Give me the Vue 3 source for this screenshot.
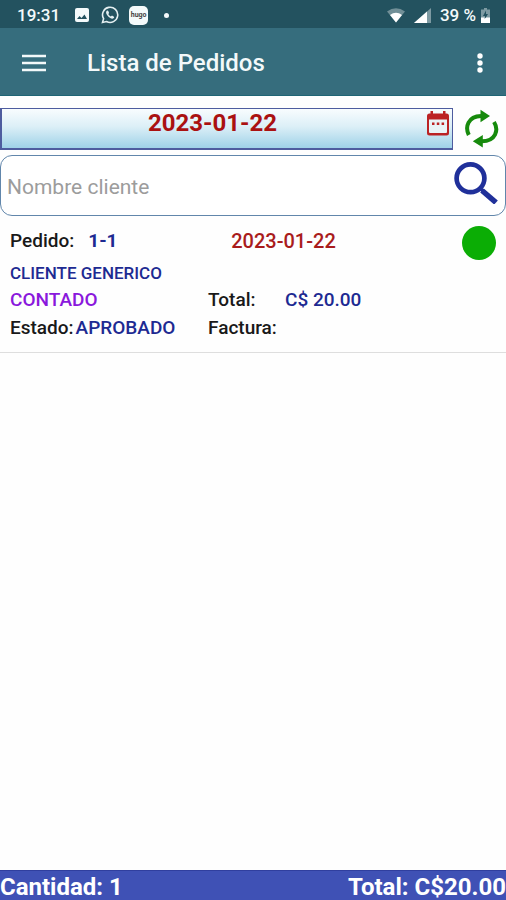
<template>
  <div class="screen">
    <div class="status-bar">
      <span>19:31</span>
      <svg class="status-image" width="14" height="14" viewBox="0 0 14 14" aria-hidden="true">
        <rect width="14" height="14" rx="2" fill="#f4fafb" />
        <path d="M2 11 4.500 8l2 2L9.500 6.500 12 11z" fill="#23525f" />
      </svg>
      <svg class="status-chat" width="18" height="18" viewBox="0 0 18 18" fill="none" aria-hidden="true">
        <path d="M1.500 16.500 2.600 12.700A7.600 7.600 0 1 1 5.500 15.500z" stroke="#e4eff1" stroke-width="1.600" />
        <path d="M5.800 4.800c-1.300 1-.8 3 .8 5 1.800 2.200 4.500 3.500 5.900 2.500 1-.8.8-1.500 0-1.900l-1.500-.8-1.200 1c-1-.4-2-1.400-2.500-2.500l.8-1-.8-2c-.3-.7-.9-.8-1.500-.3z" fill="#e4eff1" />
      </svg>
      <span class="status-app">hugo</span>
      <span class="status-dot" />
      <div class="status-right">
        <svg width="18" height="15" viewBox="0 0 18 15" aria-hidden="true">
          <path d="M0 3.500Q9-3 18 3.500L9 14.500z" fill="#718f97" />
          <path d="M3 7Q9 2.500 15 7L9 14.500z" fill="#fff" />
        </svg>
        <svg width="17" height="15" viewBox="0 0 17 15" aria-hidden="true">
          <path d="M0 15 17 0v15z" fill="#7d9aa2" />
          <path d="M0 15 13 3.500V15z" fill="#fff" />
        </svg>
        <span>39 %</span>
        <svg class="battery" width="9" height="15" viewBox="0 0 9 15" aria-hidden="true">
          <path d="M3 0h3v1.500h3V15H0V1.500h3z" fill="#7d9aa2" />
          <path d="M5 2.500 2 8h2v3l3-5H5z" fill="#23525f" />
          <path d="M0 9.500h3.500V11L5 9.500h4V15H0z" fill="#fff" />
        </svg>
      </div>
    </div>

    <header class="toolbar">
      <button class="icon-btn" type="button" aria-label="Abrir menú">
        <svg width="24" height="18" viewBox="0 0 24 18" aria-hidden="true">
          <path d="M0 2h24M0 9h24M0 16h24" stroke="#f3f9fa" stroke-width="2.400" />
        </svg>
      </button>
      <h1>Lista de Pedidos</h1>
      <button class="icon-btn" type="button" aria-label="Más opciones">
        <svg width="6" height="20" viewBox="0 0 6 20" fill="#fff" aria-hidden="true">
          <circle cx="3" cy="3" r="2.700" />
          <circle cx="3" cy="10" r="2.700" />
          <circle cx="3" cy="17" r="2.700" />
        </svg>
      </button>
    </header>

    <div class="date-row">
      <button class="date-btn" type="button">
        <span class="date-text">{{ date }}</span>
        <svg width="22" height="25" viewBox="0 0 22 25" aria-hidden="true">
          <path d="M3.500 0H6v2.500h10V0h2.500v2.500h1Q22 2.500 22 5v17q0 2.500-2.500 2.500h-17Q0 24.500 0 22V5q0-2.500 2.500-2.500h1z" fill="#bb2224" />
          <path d="M2 8.500h18V21q0 1-1 1H3q-1 0-1-1z" fill="#e9f3f7" />
          <path d="M5 11.500h2.500V14H5zM9.800 11.500h2.500V14H9.800zM14.600 11.500h2.500V14h-2.500z" fill="#bb2224" />
        </svg>
      </button>
      <button class="icon-btn refresh" type="button" aria-label="Actualizar">
        <svg width="36" height="40" viewBox="0 0 36 40" aria-hidden="true">
          <g fill="none" stroke="#168a0c" stroke-width="4">
            <path d="M4.800 27C.8 19 4 8.300 17 8" />
            <path d="M30 14C35 22 31.800 33 17.800 33.300" />
          </g>
          <path d="M16.500 1.700 26 8l-9.500 6.300zM18.800 27 8.800 33.300l10 6.300z" fill="#168a0c" />
        </svg>
      </button>
    </div>

    <form class="search-box" @submit.prevent>
      <input v-model="query" type="text" placeholder="Nombre cliente" aria-label="Nombre cliente" />
      <button class="icon-btn" type="submit" aria-label="Buscar">
        <svg width="44" height="42" viewBox="0 0 44 42" fill="none" stroke="#20309a" aria-hidden="true">
          <circle cx="16.500" cy="16.300" r="13.900" stroke-width="4.700" />
          <path d="M25.500 25.500 29 29" stroke-width="3.500" />
          <path d="M28 28.500 42 40.500" stroke-width="5.500" />
        </svg>
      </button>
    </form>

    <main class="orders">
      <article v-for="order in visibleOrders" :key="order.id" class="order">
        <div class="line line-top">
          <span class="label">Pedido:</span>
          <span class="value number">{{ order.id }}</span>
          <span class="order-date">{{ order.date }}</span>
          <span class="state-dot" />
        </div>
        <div class="client">{{ order.client }}</div>
        <div class="line">
          <span class="left payment">{{ order.payment }}</span>
          <span class="label total-label">Total:</span>
          <span class="value">C$ {{ order.total }}</span>
        </div>
        <div class="line">
          <span class="left"><span class="label">Estado:</span><span class="value status">{{ order.status }}</span></span>
          <span class="label">Factura:</span>
        </div>
      </article>
    </main>

    <footer class="summary">
      <span>Cantidad: {{ visibleOrders.length }}</span>
      <span>Total: C${{ total }}</span>
    </footer>
  </div>
</template>

<script setup>
import { computed, ref } from "vue";

const date = ref("2023-01-22");
const query = ref("");

const orders = ref([
  {
    id: "1-1",
    date: "2023-01-22",
    client: "CLIENTE GENERICO",
    payment: "CONTADO",
    status: "APROBADO",
    total: "20.00",
  },
]);

const visibleOrders = computed(() =>
  orders.value.filter((item) => item.client.includes(query.value.trim().toUpperCase()))
);

const total = computed(() =>
  visibleOrders.value.reduce((sum, item) => sum + Number(item.total), 0).toFixed(2)
);
</script>

<style>
body {
  margin: 0;
  background: #fefefe;
}
</style>

<style scoped>
.screen,
.screen * {
  box-sizing: border-box;
}

.screen {
  display: flex;
  flex-direction: column;
  min-height: 100vh;
  background: #fefefe;
  font-family: Roboto, sans-serif;
  font-weight: 500;
}

button,
input {
  font: inherit;
}

svg {
  display: block;
  flex: none;
}

.status-bar {
  display: flex;
  align-items: center;
  height: 28px;
  padding: 2px 16px 0 17px;
  background: #23525f;
  color: #f4fafb;
  font-size: 17px;
}

.status-image {
  margin-left: 15px;
}

.status-chat {
  margin-left: 12px;
}

.status-app {
  width: 19px;
  height: 19px;
  margin-left: 10px;
  border-radius: 5px;
  background: #f4fafb;
  color: #444;
  font-size: 7px;
  font-weight: 700;
  line-height: 18px;
  text-align: center;
}

.status-dot {
  width: 5px;
  height: 5px;
  margin-left: 16px;
  border-radius: 50%;
  background: #f4fafb;
}

.status-right {
  display: flex;
  align-items: center;
  gap: 9px;
  margin-left: auto;
}

.battery {
  margin-left: -4px;
}

.toolbar {
  display: flex;
  align-items: center;
  height: 68px;
  padding: 2px 23px 0 22px;
  border-bottom: 1px solid #1f6575;
  background: #366d7d;
}

.toolbar h1 {
  flex: 1;
  margin: 0 0 0 41px;
  color: #f3f9fa;
  font-size: 24px;
  font-weight: 500;
}

.icon-btn {
  display: flex;
  flex: none;
  padding: 0;
  border: 0;
  background: none;
  cursor: pointer;
}

.date-row {
  display: flex;
  margin-top: 12px;
}

.date-btn {
  display: flex;
  flex: 1;
  align-items: flex-start;
  height: 42px;
  padding: 1px 3px 1px 0;
  border: 1px solid #4e5c9f;
  border-left-width: 2px;
  border-bottom-width: 2px;
  background: linear-gradient(#f8fcfe, #dceff7 45%, #9fd2e8);
  cursor: pointer;
}

.date-text {
  flex: 1;
  padding-right: 4px;
  color: #aa1111;
  font-size: 24px;
  font-weight: 700;
  line-height: 26px;
  text-align: center;
}

.date-btn svg {
  margin-top: 1px;
}

.refresh {
  padding: 0 6px 0 11px;
}

.search-box {
  display: flex;
  align-items: flex-start;
  height: 61px;
  margin-top: 5px;
  padding: 6px 7px 0 6px;
  border: 1px solid #6186ab;
  border-radius: 12px;
  background: #fff;
}

.search-box input {
  flex: 1;
  min-width: 0;
  height: 50px;
  padding: 0;
  border: 0;
  outline: none;
  background: none;
  color: #222;
  font-size: 21px;
  font-weight: 400;
}

.search-box input::placeholder {
  color: #9c9c9c;
  opacity: 1;
}

.orders {
  flex: 1;
}

.order {
  padding: 10px 10px 9px;
  border-bottom: 1px solid #dedede;
  font-size: 19px;
}

.line {
  height: 28px;
  display: flex;
  line-height: 26px;
}

.line-top {
  height: 34px;
  line-height: 30px;
}

.label {
  color: #191919;
}

.value,
.client {
  color: #1d2a92;
}

.number {
  flex: 0 0 143px;
  margin-left: 14px;
  font-weight: 700;
}

.order-date {
  flex: 1;
  color: #a91c1c;
  font-size: 20px;
}

.status {
  margin-left: 2px;
}

.state-dot {
  width: 34px;
  height: 34px;
  border-radius: 50%;
  background: #0bad05;
}

.client {
  padding-bottom: 1px;
  font-size: 17px;
  line-height: 26px;
}

.left {
  flex: 0 0 198px;
}

.payment {
  color: #8a18dc;
}

.total-label {
  flex: 0 0 77px;
}

.summary {
  display: flex;
  justify-content: space-between;
  height: 30px;
  padding-top: 2px;
  border-top: 1px solid #303f9f;
  background: #3f51b5;
  color: #fff;
  font-size: 24px;
  font-weight: 700;
  line-height: 28px;
}
</style>
